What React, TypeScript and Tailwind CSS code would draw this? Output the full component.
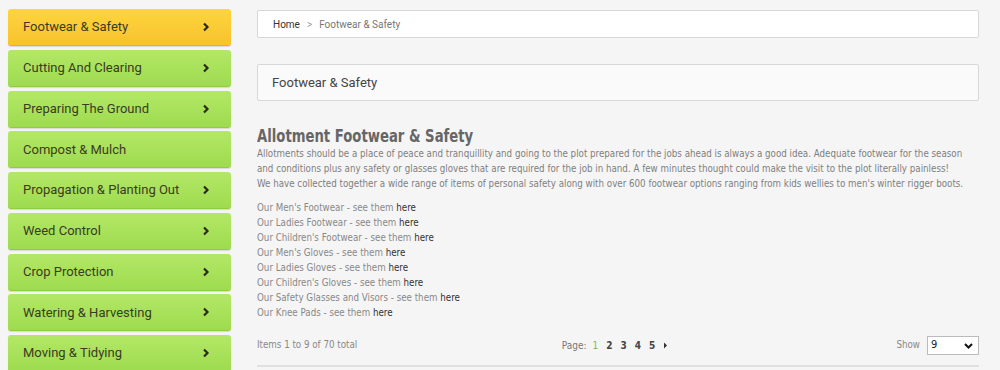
import React from 'react';

const categories = [
  { name: 'Footwear & Safety', active: true, arrow: true },
  { name: 'Cutting And Clearing', arrow: true },
  { name: 'Preparing The Ground', arrow: true },
  { name: 'Compost & Mulch', arrow: false },
  { name: 'Propagation & Planting Out', arrow: true },
  { name: 'Weed Control', arrow: true },
  { name: 'Crop Protection', arrow: true },
  { name: 'Watering & Harvesting', arrow: true },
  { name: 'Moving & Tidying', arrow: true },
];

const links = [
  "Our Men's Footwear",
  'Our Ladies Footwear',
  "Our Children's Footwear",
  "Our Men's Gloves",
  'Our Ladies Gloves',
  "Our Children's Gloves",
  'Our Safety Glasses and Visors',
  'Our Knee Pads',
];

const narrow = { fontFamily: '"DejaVu Sans Condensed", Roboto, sans-serif' };

function Chevron() {
  return (
    <svg width="8" height="10" viewBox="0 0 8 10" className="shrink-0">
      <path d="M2 1.5 L5.5 5 L2 8.5" fill="none" stroke="#2b2b1a" strokeWidth="2.2" />
    </svg>
  );
}

export default function App() {
  return (
    <div className="flex h-[370px] overflow-hidden bg-[#f5f5f5] pl-[8px] pt-[9px] text-[#333]" style={{ fontFamily: 'Roboto, sans-serif' }}>
      <nav className="flex w-[223px] shrink-0 flex-col gap-[3.75px]">
        {categories.map((c) => (
          <div
            key={c.name}
            className={`flex h-[37px] shrink-0 items-center justify-between rounded-[3px] pl-[15px] pr-[21px] text-[13px] text-[#3b3b22] shadow-[0_1px_1px_rgba(0,0,0,0.12)] ${
              c.active
                ? 'bg-gradient-to-b from-[#fdd53e] to-[#f8c22c] border-b border-[#e8b020]'
                : 'bg-gradient-to-b from-[#b3e866] to-[#9edb4f] border-b border-[#8fcb45]'
            }`}
          >
            <span>{c.name}</span>
            {c.arrow && <Chevron />}
          </div>
        ))}
      </nav>

      <main className="ml-[26px] flex w-[722px] flex-col">
        <div className="mt-[1px] flex h-[28px] shrink-0 items-center rounded-[2px] border border-[#d8d8d8] bg-white pl-[15px] text-[10px]">
          <span className="text-[#333]">Home</span>
          <span className="mx-[7px] text-[#999]">&gt;</span>
          <span className="text-[#777]">Footwear &amp; Safety</span>
        </div>

        <div className="mt-[26px] flex h-[37px] shrink-0 items-center rounded-[2px] border border-[#d8d8d8] bg-[#fafafa] pl-[14px] text-[13px] text-[#444]">
          Footwear &amp; Safety
        </div>

        <h1
          className="mt-[25px] origin-left scale-x-[0.84] whitespace-nowrap text-[17.5px] font-bold leading-[20px] text-[#666]"
          style={narrow}
        >
          Allotment Footwear &amp; Safety
        </h1>
        <p className="text-[9.7px] leading-[15px] text-[#808080]" style={narrow}>
          Allotments should be a place of peace and tranquillity and going to the plot prepared for the jobs ahead is always a good idea. Adequate footwear for the season and conditions plus any safety or glasses gloves that are required for the job in hand. A few minutes thought could make the visit to the plot literally painless!
          <br />
          We have collected together a wide range of items of personal safety along with over 600 footwear options ranging from kids wellies to men's winter rigger boots.
        </p>

        <ul className="mt-[9px] text-[9.7px] leading-[15px] text-[#888]" style={narrow}>
          {links.map((l) => (
            <li key={l}>
              {l} - see them <span className="text-[#333]">here</span>
            </li>
          ))}
        </ul>

        <div className="mt-[16px] flex shrink-0 items-center justify-between text-[9.7px]" style={narrow}>
          <span className="w-[200px] text-[#888]">Items 1 to 9 of 70 total</span>
          <div className="-ml-[6px] flex items-center gap-[8px] text-[10px] font-bold text-[#444]">
            <span className="-mr-[2px] font-normal text-[#777]">Page:</span>
            <span className="font-normal text-[#7bbf45]">1</span>
            <span>2</span>
            <span>3</span>
            <span>4</span>
            <span>5</span>
            <svg width="5" height="7" viewBox="0 0 5 7">
              <path d="M1 0.5 L4 3.5 L1 6.5 Z" fill="#333" />
            </svg>
          </div>
          <div className="flex w-[200px] items-center justify-end gap-[7px]">
            <span className="text-[#888]">Show</span>
            <div className="flex h-[19px] w-[52px] items-center justify-between border border-[#bbb] bg-white pl-[3px] pr-[5px] text-[11px] text-[#222]">
              <span>9</span>
              <svg width="9" height="6" viewBox="0 0 9 6">
                <path d="M1 1 L4.5 4.5 L8 1" fill="none" stroke="#111" strokeWidth="2" />
              </svg>
            </div>
          </div>
        </div>
        <div className="mt-[10px] h-[2px] shrink-0 bg-[#e0e0e0]" />
      </main>
    </div>
  );
}
